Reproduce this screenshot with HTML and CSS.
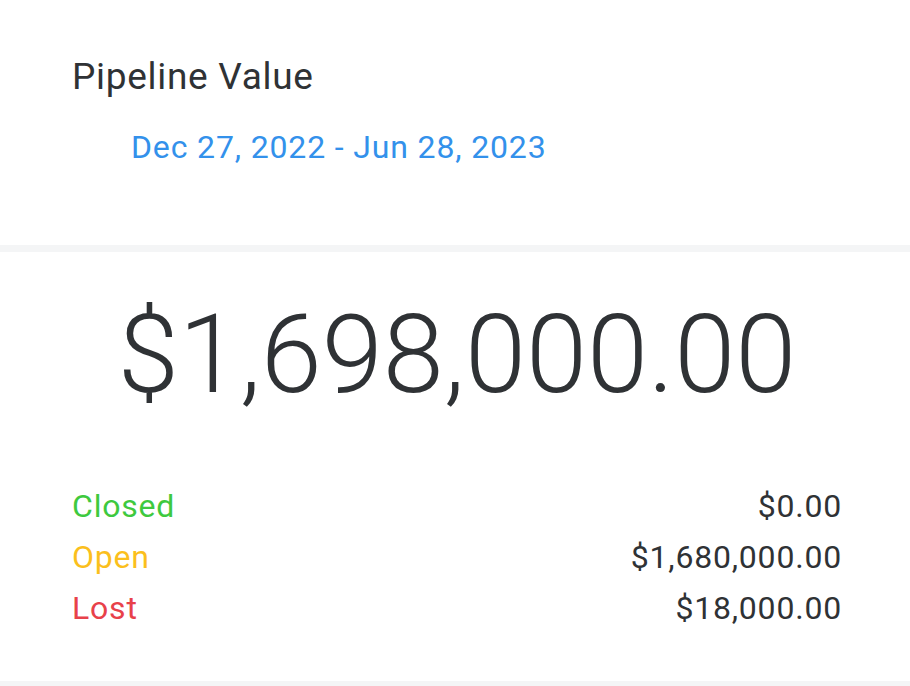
FILE: index.html
```html
<!DOCTYPE html>
<html lang="en">

<head>
	<meta charset="UTF-8">
	<title>Pipeline Value</title>
	<link rel="stylesheet" href="styles.css">
</head>

<body>
	<div class="card">
		<div class="card-head">
			<h2 class="title">Pipeline Value</h2>
			<div class="range">Dec 27, 2022 - Jun 28, 2023</div>
		</div>
		<div class="card-body">
			<div class="total">$1,698,000.00</div>
			<ul class="breakdown">
				<li><span class="label closed">Closed</span><span class="amount">$0.00</span></li>
				<li><span class="label open">Open</span><span class="amount">$1,680,000.00</span></li>
				<li><span class="label lost">Lost</span><span class="amount">$18,000.00</span></li>
			</ul>
		</div>
	</div>
</body>

</html>
```

FILE: styles.css
```css
/*
  Pipeline value card.
*/
body {
	margin: 0;
	background: #fff;
	font-family: Roboto, "Liberation Sans", sans-serif;
	color: #2f3235;
}

.card {
	width: 910px;
	height: 686px;
	display: flex;
	flex-direction: column;
}

.card-head {
	height: 252px;
	padding: 52px 0 0 72px;
	box-sizing: border-box;
	border-bottom: 7px solid #f4f5f6;
}

.title {
	margin: 0;
	font-size: 37px;
	font-weight: 400;
	line-height: 50px;
	letter-spacing: 0.7px;
}

.range {
	margin: 25px 0 0 59px;
	font-size: 32px;
	line-height: 40px;
	letter-spacing: 0.85px;
	color: #3391eb;
}

.card-body {
	flex: 1;
	padding: 0 68px 0 72px;
	border-bottom: 5px solid #f4f5f6;
}

.total {
	margin-top: 33px;
	text-align: center;
	font-size: 110px;
	font-weight: 300;
	line-height: 140px;
}

.breakdown {
	list-style: none;
	margin: 56px 0 0;
	padding: 0;
}

.breakdown li {
	display: flex;
	justify-content: space-between;
	font-size: 32px;
	line-height: 51px;
	letter-spacing: 0.8px;
}

.closed {
	color: #3ec93e;
}

.open {
	color: #fbbf1d;
}

.lost {
	color: #e8414a;
}
```
